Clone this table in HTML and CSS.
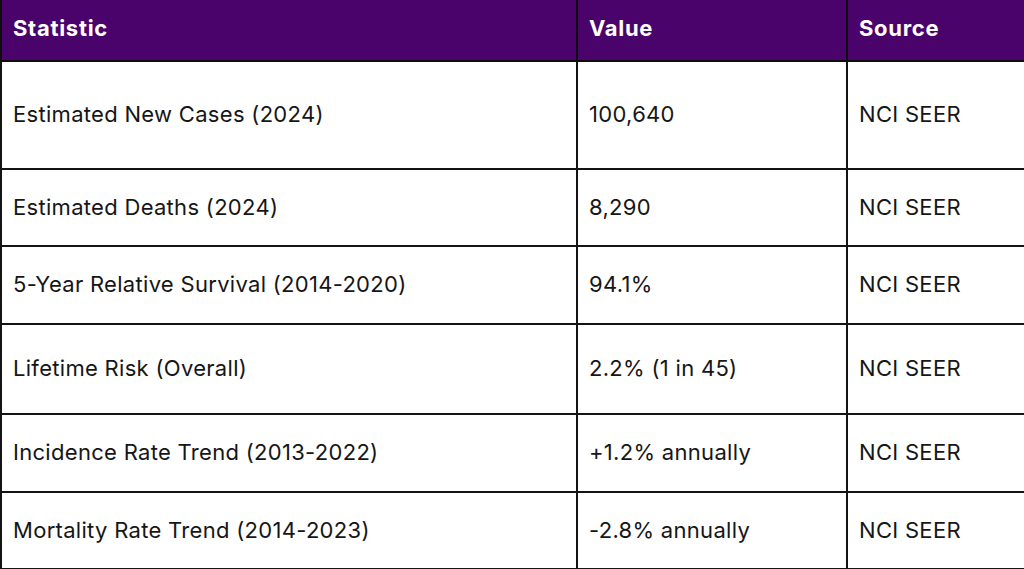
FILE: index.html
```html
<!DOCTYPE html>
<html lang="en">
<head>
<meta charset="utf-8">
<title>Statistics</title>
<link rel="stylesheet" href="styles.css">
</head>
<body>
<table class="stats">
  <colgroup>
    <col class="c1"><col class="c2"><col class="c3">
  </colgroup>
  <thead>
    <tr class="head">
      <th>Statistic</th>
      <th>Value</th>
      <th>Source</th>
    </tr>
  </thead>
  <tbody>
    <tr class="r1"><td>Estimated New Cases (2024)</td><td>100,640</td><td>NCI SEER</td></tr>
    <tr class="r2"><td>Estimated Deaths (2024)</td><td>8,290</td><td>NCI SEER</td></tr>
    <tr class="r3"><td>5-Year Relative Survival (2014-2020)</td><td>94.1%</td><td>NCI SEER</td></tr>
    <tr class="r4"><td>Lifetime Risk (Overall)</td><td>2.2% (1 in 45)</td><td>NCI SEER</td></tr>
    <tr class="r5"><td>Incidence Rate Trend (2013-2022)</td><td>+1.2% annually</td><td>NCI SEER</td></tr>
    <tr class="r6"><td>Mortality Rate Trend (2014-2023)</td><td>-2.8% annually</td><td>NCI SEER</td></tr>
  </tbody>
</table>
</body>
</html>
```

FILE: styles.css
```css
html, body {
  margin: 0;
  padding: 0;
  background: #ffffff;
}

.stats {
  width: 1024px;
  border-collapse: collapse;
  table-layout: fixed;
  font-family: Inter, "Liberation Sans", sans-serif;
  color: #161616;
}

.c1 { width: 576px; }
.c2 { width: 270px; }
.c3 { width: 178px; }

.stats th,
.stats td {
  border: 2px solid #141414;
  padding: 0 11px;
  text-align: left;
  vertical-align: middle;
}

.stats th {
  background: #4a036b;
  color: #ffffff;
  font-weight: 700;
  font-size: 22px;
  letter-spacing: 0.7px;
  border-top: none;
  border-color: #0e0e0e;
  padding-bottom: 4px;
}

.stats td {
  font-size: 22px;
  font-weight: 400;
  letter-spacing: 0.3px;
  padding-bottom: 2px;
}

.head { height: 61px; }
.r1 { height: 108px; }
.r2 { height: 77px; }
.r3 { height: 78px; }
.r4 { height: 90px; }
.r5 { height: 78px; }
.r6 { height: 77px; }
```
